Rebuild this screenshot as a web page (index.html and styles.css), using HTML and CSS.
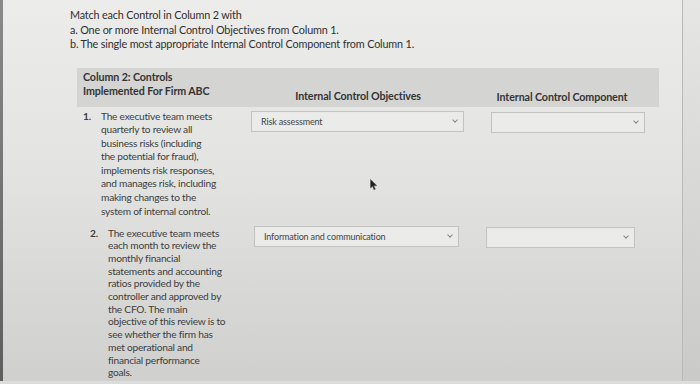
FILE: index.html
```html
<!DOCTYPE html>
<html>
<head>
<meta charset="utf-8">
<link rel="stylesheet" href="styles.css">
</head>
<body>
<div class="screen">
  <div class="bezel"></div>
  <div class="page">
    <div class="intro">
      <p>Match each Control in Column 2 with</p>
      <p>a. One or more Internal Control Objectives from Column 1.</p>
      <p>b. The single most appropriate Internal Control Component from Column 1.</p>
    </div>
    <div class="table">
      <div class="head">
        <div class="h1">Column 2: Controls<br>Implemented For Firm ABC</div>
        <div class="h2">Internal Control Objectives</div>
        <div class="h3">Internal Control Component</div>
      </div>
      <div class="row r1">
        <div class="ctrl"><span class="num">1.</span><span class="txt">The executive team meets<br>quarterly to review all<br>business risks (including<br>the potential for fraud),<br>implements risk responses,<br>and manages risk, including<br>making changes to the<br>system of internal control.</span></div>
        <div class="sel obj"><span>Risk assessment</span><i class="chev"></i></div>
        <div class="sel comp"><span></span><i class="chev"></i></div>
      </div>
      <div class="row r2">
        <div class="ctrl"><span class="num">2.</span><span class="txt">The executive team meets<br>each month to review the<br>monthly financial<br>statements and accounting<br>ratios provided by the<br>controller and approved by<br>the CFO. The main<br>objective of this review is to<br>see whether the firm has<br>met operational and<br>financial performance<br>goals.</span></div>
        <div class="sel obj"><span>Information and communication</span><i class="chev"></i></div>
        <div class="sel comp"><span></span><i class="chev"></i></div>
      </div>
      <svg class="cursor" width="8" height="12" viewBox="0 0 8 12"><path d="M0.5 0.5 L0.5 9 L2.6 7.2 L4 10.8 L5.3 10.2 L3.9 6.8 L6.8 6.6 Z" fill="#222" stroke="#555" stroke-width="0.5"/></svg>
    </div>
  </div>
  <div class="edge"></div>
</div>
</body>
</html>
```

FILE: styles.css
```css
html, body {
  margin: 0;
  padding: 0;
}
body {
  width: 700px;
  height: 384px;
  overflow: hidden;
  font-family: Lato, "Open Sans", sans-serif;
  color: #3a3a3a;
  background: linear-gradient(180deg, #ececea 0%, #e3e4e2 45%, #cfd0cd 100%);
}
.screen {
  display: flex;
  height: 381px;
  border-bottom: 3px solid #dcdcda;
}
.bezel {
  width: 3px;
  background: linear-gradient(180deg, #8a8a8a, #5e5e5e);
}
.page {
  width: 679px;
  padding-left: 67px;
  box-sizing: border-box;
  position: relative;
}
.edge {
  flex: 1;
  border-left: 1px solid #b9bab7;
  background: linear-gradient(180deg, #e6e6e4, #cacbc8);
}
.intro {
  padding-top: 8px;
  font-size: 10.8px;
  line-height: 14.5px;
  color: #2f2f2f;
  letter-spacing: -0.15px;
}
.intro p {
  margin: 0;
}
.table {
  margin-top: 16px;
  width: 582px;
  margin-left: 7px;
  position: relative;
}
.head {
  display: grid;
  grid-template-columns: 174px 214px 1fr;
  background: #d4d5d3;
  height: 39px;
  align-items: end;
  font-weight: bold;
  font-size: 10.7px;
  color: #333;
  letter-spacing: -0.1px;
}
.h1 {
  padding-left: 6px;
  line-height: 14.5px;
  align-self: start;
  padding-top: 2px;
}
.h2 {
  text-align: center;
  padding-bottom: 5px;
}
.h3 {
  text-align: center;
  padding-bottom: 4px;
}
.row {
  display: grid;
  grid-template-columns: 174px 234px 1fr;
  align-items: start;
}
.r1 {
  padding-top: 3px;
  height: 116px;
}
.r2 {
  height: 150px;
}
.ctrl {
  display: flex;
  font-size: 10.2px;
  line-height: 13.6px;
  color: #3d3d3d;
  letter-spacing: -0.25px;
  white-space: nowrap;
}
.r1 .ctrl {
  padding-left: 6px;
}
.r2 .ctrl {
  padding-left: 13px;
  line-height: 12.7px;
  margin-top: 1px;
}
.num {
  width: 18px;
  flex: none;
  font-weight: bold;
}
.sel {
  height: 21px;
  border: 1px solid #c3c4c1;
  box-shadow: inset 0 0 0 1px #e9e9e7;
  background: #ebebe9;
  display: flex;
  align-items: center;
  justify-content: space-between;
  padding: 0 6px 0 9px;
  box-sizing: border-box;
  font-size: 9px;
  color: #444;
  letter-spacing: -0.15px;
}
.r1 .obj {
  margin-top: 1px;
  width: 213px;
}
.r1 .comp {
  margin-top: 2px;
  margin-left: 6px;
  width: 154px;
}
.r2 .obj {
  margin-left: 3px;
  width: 205px;
}
.r2 .comp {
  margin-top: 1px;
  margin-left: 1px;
  width: 149px;
}
.chev {
  width: 3px;
  height: 3px;
  border-right: 1px solid #888;
  border-bottom: 1px solid #888;
  transform: rotate(45deg);
  margin-bottom: 2px;
}
.cursor {
  position: absolute;
  left: 293px;
  top: 111px;
}
```
